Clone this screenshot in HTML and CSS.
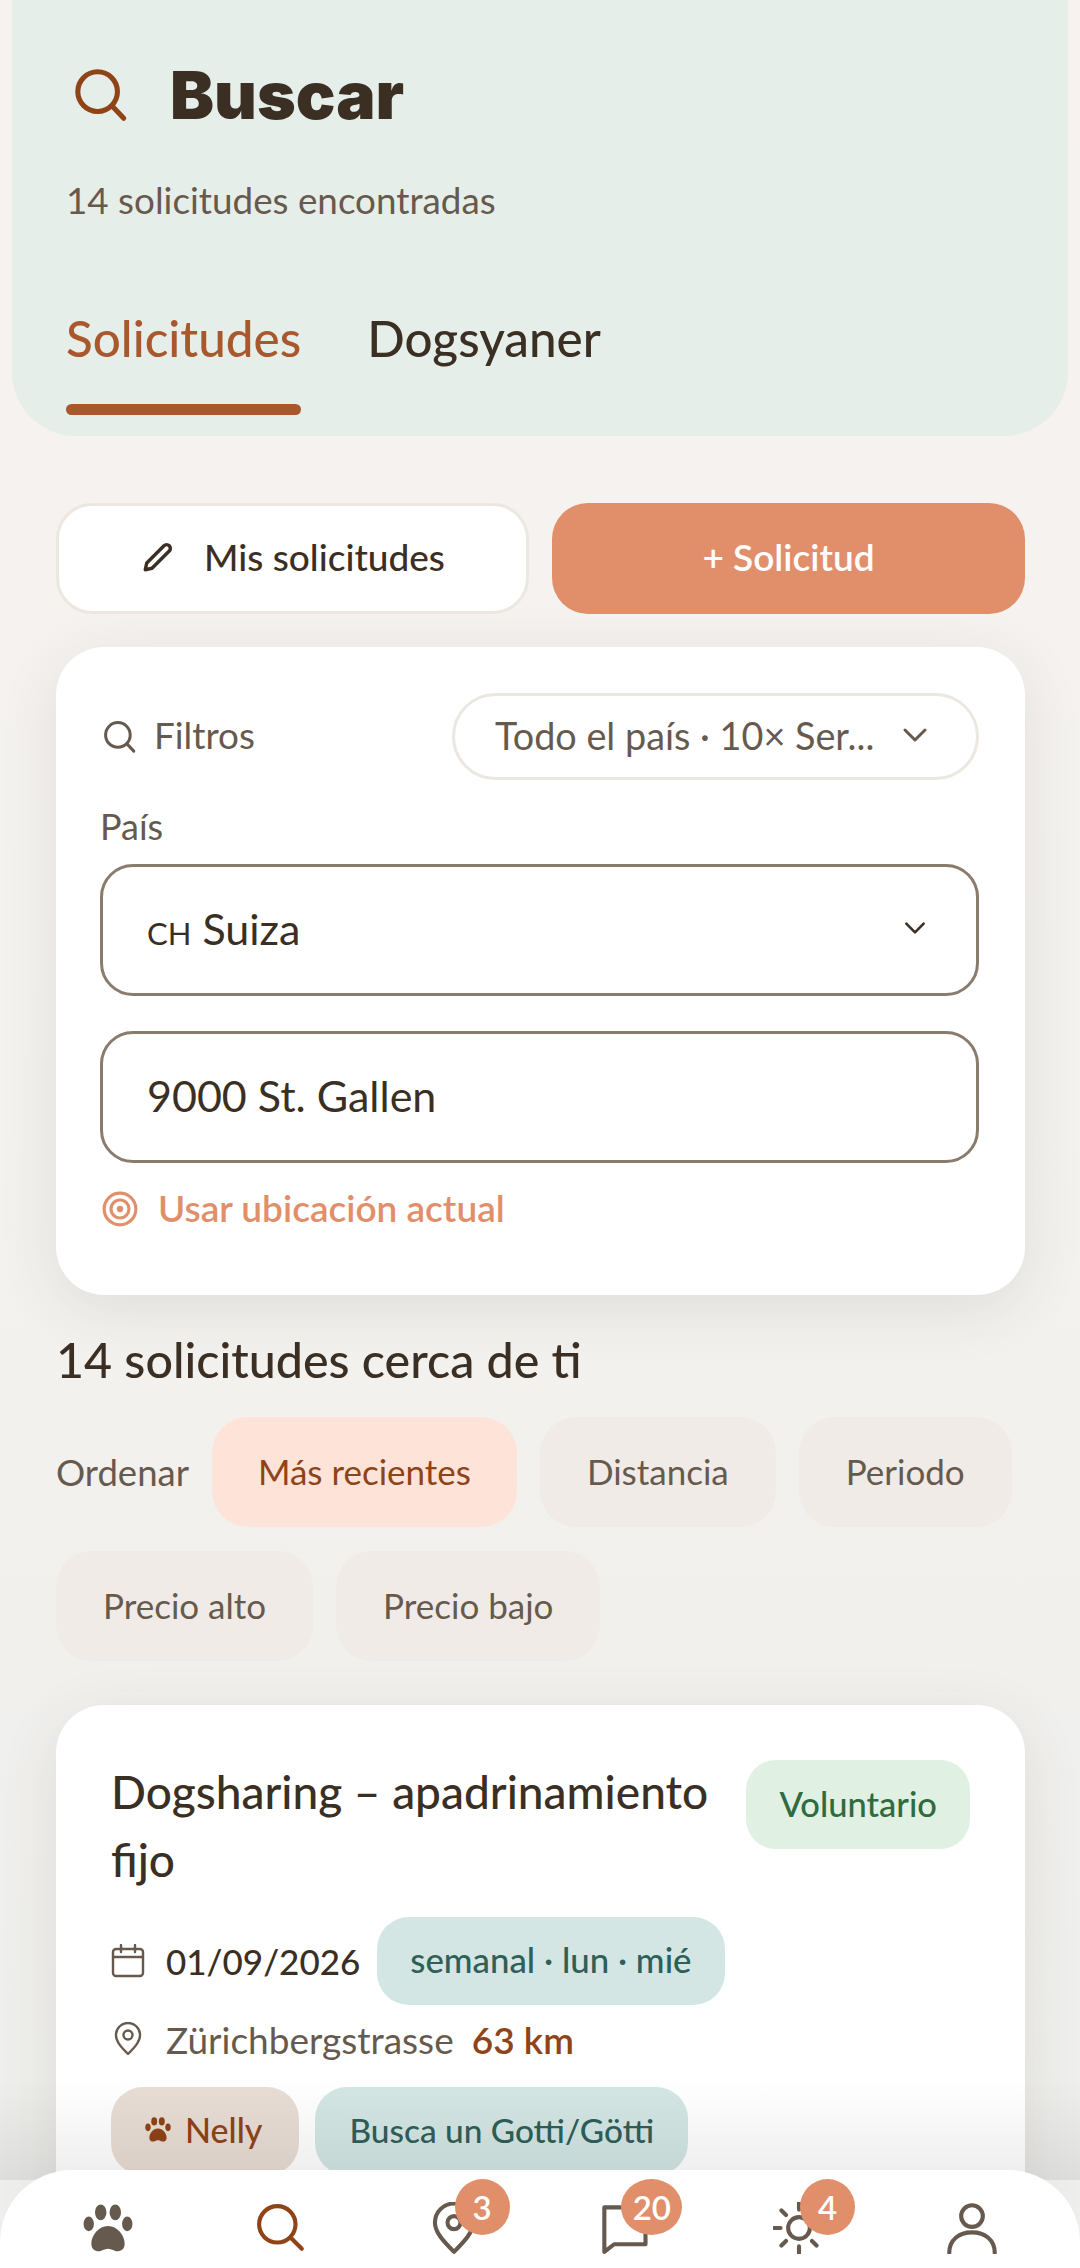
FILE: index.html
```html
<!DOCTYPE html>
<html lang="es">
<head>
    <meta charset="UTF-8">
    <meta name="viewport" content="width=device-width, initial-scale=1.0">
    <title>Buscar</title>
    <link rel="stylesheet" href="styles.css">
</head>
<body>
    <header class="top">
        <div class="top-title">
            <svg class="ico-title" viewBox="0 0 24 24"><circle cx="10.6" cy="10.6" r="8.2"/><path d="M16.6 16.6l4.8 5"/></svg>
            <h1>Buscar</h1>
        </div>
        <p class="top-sub">14 solicitudes encontradas</p>
        <nav class="tabs">
            <a class="tab active">Solicitudes</a>
            <a class="tab">Dogsyaner</a>
        </nav>
    </header>

    <main class="container">
        <section class="actions">
            <button class="btn btn-white">
                <svg class="ico-pen" viewBox="0 0 24 24"><path d="M3.5 20.5l1-4.5L16 4.5a2.1 2.1 0 0 1 3.5 3.5L8 19.5z"/></svg>
                Mis solicitudes
            </button>
            <button class="btn btn-orange">+ Solicitud</button>
        </section>

        <section class="card filters">
            <div class="filters-head">
                <span class="filters-label">
                    <svg class="ico-filter" viewBox="0 0 24 24"><circle cx="10.6" cy="10.6" r="8.2"/><path d="M16.6 16.6l4.6 4.8"/></svg>
                    Filtros
                </span>
                <span class="pill">
                    Todo el país · 10× Ser...
                    <svg class="ico-chev" viewBox="0 0 24 24"><path d="M4 8l8 8 8-8"/></svg>
                </span>
            </div>
            <label class="field-label">País</label>
            <div class="field">
                <span><small>CH</small> Suiza</span>
                <svg class="ico-chev small" viewBox="0 0 24 24"><path d="M4 8l8 8 8-8"/></svg>
            </div>
            <div class="field field-gap">9000 St. Gallen</div>
            <a class="locate">
                <svg class="ico-target" viewBox="0 0 34 34"><circle cx="17" cy="17" r="15"/><circle cx="17" cy="17" r="8.5"/><circle class="dot" cx="17" cy="17" r="3"/></svg>
                Usar ubicación actual
            </a>
        </section>

        <h2 class="results-title">14 solicitudes cerca de ti</h2>
        <div class="sort">
            <span class="sort-label">Ordenar</span>
            <span class="chip chip-on">Más recientes</span>
            <span class="chip">Distancia</span>
            <span class="chip">Periodo</span>
            <span class="chip">Precio alto</span>
            <span class="chip">Precio bajo</span>
        </div>

        <article class="card request">
            <div class="request-head">
                <h3>Dogsharing – apadrinamiento fijo</h3>
                <span class="badge-green">Voluntario</span>
            </div>
            <div class="request-date">
                <svg class="ico-meta" viewBox="0 0 34 34"><rect x="2" y="5" width="30" height="27" rx="3"/><path d="M2 13h30M10 1v7M24 1v7"/></svg>
                <span class="date">01/09/2026</span>
                <span class="tag-teal">semanal · lun · mié</span>
            </div>
            <div class="request-place">
                <svg class="ico-meta" viewBox="0 0 34 34"><path d="M17 32C11 26 5 20 5 13a12 12 0 0 1 24 0c0 7-6 13-12 19z"/><circle cx="17" cy="13" r="4.5"/></svg>
                <span>Zürichbergstrasse</span>
                <b>63 km</b>
            </div>
            <div class="request-tags">
                <span class="tag-dog">
                    <svg class="ico-paw" viewBox="0 0 48 46"><use href="#paw"/></svg>
                    Nelly
                </span>
                <span class="tag-seek">Busca un Gotti/Götti</span>
            </div>
        </article>
    </main>

    <div class="fade"></div>

    <nav class="bottom">
        <a class="bottom-item">
            <svg class="nav-paw" viewBox="0 0 48 46">
                <g id="paw">
                    <ellipse cx="5.5" cy="19" rx="5" ry="7"/>
                    <ellipse cx="17" cy="8" rx="5.5" ry="7.5"/>
                    <ellipse cx="31" cy="8" rx="5.5" ry="7.5"/>
                    <ellipse cx="42.5" cy="19" rx="5" ry="7"/>
                    <path d="M24 21c9 0 16 9 16 17 0 6-5 8-9 7-3-1-5-2-7-2s-4 1-7 2c-4 1-9-1-9-7 0-8 7-17 16-17z"/>
                </g>
            </svg>
        </a>
        <a class="bottom-item">
            <svg class="nav-ico nav-on" viewBox="0 0 24 24"><circle cx="10.3" cy="10.3" r="8.4"/><path d="M16.4 16.4l5.2 5.2"/></svg>
        </a>
        <a class="bottom-item">
            <svg class="nav-ico" viewBox="0 0 24 24"><path d="M12 23C7 18 3.2 14 3.2 9.5a8.8 8.8 0 0 1 17.6 0C20.8 14 17 18 12 23z"/><circle cx="12" cy="9.5" r="3"/></svg>
            <span class="count">3</span>
        </a>
        <a class="bottom-item">
            <svg class="nav-ico" viewBox="0 0 24 24"><path d="M2 2.500h19v17H6.500L2 23z"/></svg>
            <span class="count count-wide">20</span>
        </a>
        <a class="bottom-item">
            <svg class="nav-ico" viewBox="0 0 24 24"><circle cx="12" cy="12" r="5"/><path d="M12 0.500v3M12 20.500v3M0.500 12h3M20.500 12h3M3.900 3.900l2.100 2.100M18 18l2.100 2.100M3.900 20.100L6 18M18 6l2.100-2.100"/></svg>
            <span class="count">4</span>
        </a>
        <a class="bottom-item">
            <svg class="nav-ico" viewBox="0 0 24 24"><circle cx="12" cy="6.500" r="5"/><path d="M1.500 23.500c0-6 4.500-9.500 10.500-9.500s10.500 3.500 10.500 9.500"/></svg>
        </a>
    </nav>
</body>
</html>
```

FILE: styles.css
```css
:root{
    --dark: #3b2f24;
    --text: #665a4e;
    --rust: #8f4317;
    --rust-light: #a9582e;
    --orange: #e18f6b;
    --mint: #e6eee9;
    --line: #8a7c6c;
    --soft-line: #ece7e1;
}
*,*::before,*::after{
    box-sizing: border-box;
    margin: 0;
    padding: 0;
    font-family: 'Lato', 'Noto Sans', sans-serif;
}
html,body{
    height: 2268px;
    overflow: hidden;
}
body{
    position: relative;
    background: linear-gradient(180deg, #f7f2ef 0%, #f3f2ef 50%, #eeeeec 100%);
    color: var(--dark);
}
svg{
    fill: none;
    stroke: currentColor;
    stroke-linecap: round;
    stroke-linejoin: round;
}

/* header */
.top{
    margin: 0 12px;
    height: 436px;
    padding: 60px 54px 0;
    background-color: var(--mint);
    border-radius: 0 0 64px 64px;
}
.top-title{
    display: flex;
    align-items: center;
    gap: 40px;
    height: 70px;
}
.ico-title{
    width: 58px;
    height: 58px;
    margin-left: 6px;
    stroke-width: 2.1;
    color: var(--rust);
}
.top h1{
    font-family: 'Inter', 'Lato', sans-serif;
    font-size: 66px;
    font-weight: 900;
    line-height: 70px;
    color: var(--dark);
}
.top-sub{
    margin-top: 48px;
    font-size: 36.8px;
    line-height: 44px;
    color: var(--text);
}
.tabs{
    display: flex;
    gap: 66px;
    margin-top: 86px;
}
.tab{
    font-size: 49.4px;
    font-weight: 500;
    line-height: 60px;
    height: 107px;
    color: var(--dark);
    position: relative;
}
.tab.active{
    color: var(--rust-light);
}
.tab.active::after{
    content: '';
    position: absolute;
    left: 0;
    right: 0;
    bottom: 0;
    height: 11px;
    border-radius: 6px;
    background-color: var(--rust-light);
}

.container{
    padding: 67px 55px 0 56px;
}

/* top buttons */
.actions{
    display: grid;
    grid-template-columns: 1fr 1fr;
    gap: 23px;
}
.btn{
    height: 111px;
    border: 0;
    border-radius: 36px;
    padding-bottom: 4px;
    font-size: 37px;
    font-weight: 500;
    display: flex;
    align-items: center;
    justify-content: center;
}
.btn-white{
    background-color: #fff;
    border: 3px solid var(--soft-line);
    color: var(--dark);
    gap: 28px;
}
.btn-orange{
    background-color: var(--orange);
    color: #fff;
    font-weight: 600;
}
.ico-pen{
    width: 36px;
    height: 36px;
    stroke-width: 2.3;
}

.card{
    background-color: #fff;
    border-radius: 48px;
    box-shadow: 0 14px 60px rgba(70, 60, 50, 0.1);
}

/* filter card */
.filters{
    margin-top: 33px;
    height: 648px;
    padding: 46px 46px 0 44px;
}
.filters-head{
    display: flex;
    justify-content: space-between;
    align-items: center;
}
.filters-label{
    display: flex;
    align-items: center;
    gap: 16px;
    padding-bottom: 3px;
    font-size: 36.8px;
    color: var(--text);
}
.ico-filter{
    width: 36px;
    height: 36px;
    margin: 3px 0 0 2px;
    stroke-width: 2;
}
.pill{
    width: 527px;
    height: 87px;
    border: 3px solid var(--soft-line);
    border-radius: 44px;
    padding: 0 46px 3px 40px;
    display: flex;
    align-items: center;
    justify-content: space-between;
    font-size: 37.8px;
    color: var(--text);
}
.ico-chev{
    width: 30px;
    height: 30px;
    stroke-width: 2.4;
    color: var(--text);
}
.ico-chev.small{
    width: 26px;
    height: 26px;
    margin-right: 4px;
    color: var(--dark);
}
.field-label{
    display: block;
    margin-top: 28px;
    font-size: 36px;
    line-height: 36px;
    color: var(--text);
}
.field{
    margin-top: 20px;
    height: 132px;
    border: 3px solid var(--line);
    border-radius: 33px;
    padding: 0 44px 4px;
    display: flex;
    align-items: center;
    justify-content: space-between;
    font-size: 43px;
    color: var(--dark);
}
.field small{
    font-size: 31px;
}
.field-gap{
    margin-top: 35px;
}
.locate{
    display: flex;
    align-items: center;
    gap: 20px;
    margin-top: 22px;
    font-size: 37px;
    font-weight: 600;
    color: var(--orange);
}
.ico-target{
    width: 36px;
    height: 36px;
    margin: 3px 0 0 2px;
    stroke-width: 3;
}
.ico-target .dot{
    fill: currentColor;
    stroke: none;
}

/* results */
.results-title{
    margin-top: 35px;
    font-size: 48.4px;
    font-weight: 500;
    line-height: 58px;
    color: var(--dark);
}
.sort{
    margin-top: 29px;
    display: flex;
    flex-wrap: wrap;
    align-items: center;
    gap: 24px 23px;
}
.sort-label{
    font-size: 36.5px;
    color: var(--text);
}
.chip{
    height: 110px;
    padding: 0 47px 3px;
    border-radius: 36px;
    background-color: #f0ebe6;
    color: var(--text);
    font-size: 35px;
    display: flex;
    align-items: center;
}
.chip-on{
    padding: 0 46px 3px;
    background-color: #fee3d8;
    color: var(--rust);
}

/* request card */
.request{
    margin-top: 44px;
    height: 600px;
    padding: 55px 55px 0;
}
.request-head{
    display: flex;
    justify-content: space-between;
    align-items: flex-start;
    gap: 36px;
}
.request-head h3{
    margin-top: -2px;
    font-size: 46px;
    font-weight: 500;
    line-height: 68px;
    color: var(--dark);
}
.badge-green{
    flex: none;
    height: 89px;
    padding: 0 33px 3px;
    border-radius: 30px;
    background-color: #e0f0e2;
    color: #2f6b3f;
    font-size: 34.5px;
    font-weight: 500;
    display: flex;
    align-items: center;
}
.request-date{
    margin-top: 23px;
    display: flex;
    align-items: center;
}
.ico-meta{
    width: 34px;
    height: 34px;
    stroke-width: 2.4;
    color: var(--text);
    flex: none;
}
.date{
    margin-left: 21px;
    font-size: 35px;
    font-weight: 500;
    color: var(--dark);
}
.tag-teal{
    margin-left: 17px;
    height: 88px;
    padding: 0 33px 3px;
    border-radius: 32px;
    background-color: #d3e6e4;
    color: #2f5f58;
    font-size: 34.8px;
    font-weight: 500;
    display: flex;
    align-items: center;
}
.request-place{
    margin-top: 9px;
    height: 50px;
    display: flex;
    align-items: center;
    font-size: 37px;
    color: var(--text);
}
.request-place span{
    margin-left: 21px;
}
.request-place b{
    margin-left: 18px;
    color: var(--rust);
    font-weight: 600;
}
.request-tags{
    margin-top: 23px;
    display: flex;
    gap: 16px;
}
.tag-dog,.tag-seek{
    height: 88px;
    padding: 0 34px 3px;
    border-radius: 32px;
    font-size: 34px;
    font-weight: 500;
    display: flex;
    align-items: center;
}
.tag-dog{
    padding-right: 37px;
    background-color: #e8ddd4;
    color: var(--rust);
    gap: 14px;
}
.tag-seek{
    font-size: 33.4px;
    background-color: #d3e6e4;
    color: #2f5f58;
}
.ico-paw{
    width: 26px;
    height: 25px;
    fill: currentColor;
    stroke: none;
}

/* bottom bar */
.fade{
    position: absolute;
    left: 0;
    right: 0;
    top: 2080px;
    height: 100px;
    background: linear-gradient(180deg, rgba(0, 0, 0, 0) 0%, rgba(0, 0, 0, 0.07) 100%);
}
.bottom{
    position: absolute;
    left: 0;
    right: 0;
    bottom: 0;
    height: 98px;
    padding: 0 22px;
    background-color: #fff;
    border-radius: 72px 72px 0 0;
    display: grid;
    grid-template-columns: repeat(6, 1fr);
    justify-items: center;
    align-items: center;
}
.bottom-item{
    position: relative;
    width: 56px;
    height: 56px;
    margin-top: 18px;
    color: var(--text);
    display: flex;
    align-items: center;
    justify-content: center;
}
.nav-ico{
    width: 52px;
    height: 52px;
    stroke-width: 1.9;
}
.nav-on{
    color: var(--rust);
}
.nav-paw{
    width: 50px;
    height: 48px;
    fill: currentColor;
    stroke: none;
}
.count{
    position: absolute;
    left: 29px;
    top: -21px;
    width: 55px;
    height: 56px;
    border-radius: 50%;
    background-color: var(--orange);
    color: #fff;
    font-size: 33px;
    font-weight: 600;
    display: flex;
    align-items: center;
    justify-content: center;
}
.count-wide{
    left: 23px;
    width: 61px;
}
```
